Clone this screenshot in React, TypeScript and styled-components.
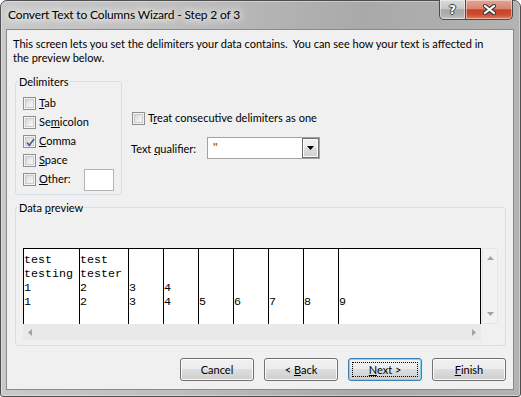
import React from 'react';
import styled, { createGlobalStyle } from 'styled-components';

const UI = `Lato, "Noto Sans", "Segoe UI", sans-serif`;

const Global = createGlobalStyle`
  html, body { margin: 0; padding: 0; background: #fff; overflow: hidden; }
  body { font-family: ${UI}; font-size: 11px; color: #000; }
`;

const Window = styled.div`
  width: 521px;
  height: 397px;
  box-sizing: border-box;
  border: 1px solid #4e4e4e;
  border-radius: 7px 7px 3px 3px;
  background: linear-gradient(to right, #c9c9c9 0%, #bdbdbd 35%, #a9a9a9 70%, #b3b3b3 100%);
  box-shadow: inset 0 0 0 1px rgba(255, 255, 255, 0.35);
  padding: 0 6px 6px 5px;
  display: flex;
  flex-direction: column;
  font-family: ${UI};
  font-size: 11px;
`;

const TitleBar = styled.div`
  height: 28px;
  flex: none;
  display: flex;
  align-items: flex-start;
`;

const Title = styled.div`
  flex: 1;
  padding: 6px 0 0 2px;
  font-size: 12px;
  letter-spacing: -0.15px;
  line-height: 15px;
  text-shadow: 0 0 6px #fff, 0 0 10px #fff, 0 0 14px #fff;
  white-space: nowrap;
`;

const Caption = styled.div`
  display: flex;
  margin: -1px 1px 0 0;
`;

const CapButton = styled.div<{ $kind: 'help' | 'close' }>`
  height: 20px;
  width: ${(p) => (p.$kind === 'close' ? 47 : 27)}px;
  box-sizing: border-box;
  border: 1px solid #4a4a4a;
  border-top: none;
  ${(p) => (p.$kind === 'close' ? 'border-left: none;' : '')}
  border-radius: ${(p) => (p.$kind === 'close' ? '0 0 5px 0' : '0 0 0 5px')};
  display: flex;
  align-items: center;
  justify-content: center;
  box-shadow: inset 0 0 0 1px rgba(255, 255, 255, 0.45);
  background: ${(p) =>
    p.$kind === 'close'
      ? 'linear-gradient(#e3a594 0%, #d98573 45%, #c4452c 52%, #cc4a2f 75%, #e27b5a 100%)'
      : 'linear-gradient(#d9d9d9 0%, #c8c8c8 45%, #a8a8a8 52%, #b0b0b0 80%, #c4c4c4 100%)'};
`;

const HelpGlyph = styled.span`
  font-family: "DejaVu Sans", sans-serif;
  font-weight: bold;
  font-size: 12px;
  line-height: 12px;
  color: #fff;
  text-shadow: 1px 0 #3a3a3a, -1px 0 #3a3a3a, 0 1px #3a3a3a, 0 -1px #3a3a3a;
`;

const Client = styled.div`
  flex: 1;
  background: #f0f0f0;
  border: 1px solid #8a8a8a;
  display: flex;
  flex-direction: column;
`;

const Intro = styled.p`
  margin: 0;
  padding: 7px 6px 0;
  line-height: 14px;
  white-space: nowrap;
`;

const OptionsRow = styled.div`
  display: flex;
  margin-top: 9px;
`;

const Group = styled.fieldset<{ $w: number }>`
  margin: 0 0 0 8px;
  min-width: 0;
  width: ${(p) => p.$w}px;
  box-sizing: border-box;
  border: 1px solid #d5dfe5;
  border-radius: 3px;
  padding: 5px 7px 5px 7px;
`;

const PreviewGroup = styled(Group)`
  margin-top: 5px;
  padding: 0 7px 5px 7px;
`;

const Legend = styled.legend`
  padding: 0 1px;
  margin-left: -5px;
  line-height: 15px;
  font-size: 11px;
`;

const CheckRow = styled.label`
  display: flex;
  align-items: center;
  height: 19px;
  white-space: nowrap;
`;

const Label = styled.span`
  line-height: 15px;
  margin-bottom: 2px;
`;

const Box = styled.span`
  position: relative;
  flex: none;
  width: 13px;
  height: 13px;
  box-sizing: border-box;
  border: 1px solid #8e8f8f;
  background: #f4f4f4;
  padding: 1px;
  margin-right: 3px;
  display: flex;
  &::before {
    content: '';
    flex: 1;
    border: 1px solid #c9cbce;
    background: linear-gradient(135deg, #d4d6d9 0%, #eeeeee 60%, #f8f8f8 100%);
  }
`;

const Tick = styled.svg`
  position: absolute;
  left: 1px;
  top: 1px;
`;

const OtherInput = styled.span`
  margin-left: auto;
  width: 30px;
  height: 22px;
  flex: none;
  box-sizing: border-box;
  border: 1px solid #b3b3b3;
  background: #fff;
`;

const Side = styled.div`
  display: flex;
  flex-direction: column;
  margin-left: 9px;
  padding-top: 35px;
`;

const SideCheck = styled(CheckRow)`
  padding-left: 1px;
`;

const QualRow = styled.div`
  display: flex;
  align-items: center;
  height: 22px;
  margin-top: 9px;
`;

const QualLabel = styled.span`
  width: 76px;
  line-height: 15px;
  white-space: nowrap;
`;

const Combo = styled.div`
  width: 113px;
  height: 22px;
  box-sizing: border-box;
  border: 1px solid #a3a3a3;
  background: #fff;
  display: flex;
  align-items: stretch;
`;

const ComboValue = styled.span`
  flex: 1;
  padding-left: 5px;
  line-height: 17px;
  color: #b8600a;
  font-size: 12px;
  font-weight: bold;
`;

const ComboButton = styled.span`
  width: 17px;
  box-sizing: border-box;
  border: 1px solid #707070;
  background: linear-gradient(#f2f2f2 0%, #ebebeb 50%, #dddddd 50%, #cfcfcf 100%);
  box-shadow: inset 0 0 0 1px #fbfbfb;
  display: flex;
  align-items: center;
  justify-content: center;
`;

const PreviewFrame = styled.div`
  margin-top: 33px;
  display: grid;
  grid-template-columns: 458px 16px;
  grid-template-rows: 76px 16px;
  column-gap: 1px;
`;

const Grid = styled.div`
  background: #fff;
  border-top: 1px solid #000;
  border-right: 1px solid #000;
  display: flex;
  overflow: hidden;
`;

const Col = styled.div<{ $w?: number }>`
  ${(p) => (p.$w ? `width: ${p.$w}px; flex: none;` : 'flex: 1;')}
  box-sizing: border-box;
  border-left: 1px solid #000;
  padding-top: 4px;
  font-family: "Liberation Mono", "Courier New", monospace;
  font-size: 11.667px;
  line-height: 14px;
  white-space: pre;
`;

const Cell = styled.div`
  height: 14px;
`;

const VScroll = styled.div`
  background: #f2f2f2;
  border: 1px solid #e6e6e6;
  box-sizing: border-box;
  display: flex;
  flex-direction: column;
  justify-content: space-between;
  align-items: center;
  padding: 7px 0;
`;

const HScroll = styled.div`
  background: #e9e9e9;
  display: flex;
  justify-content: space-between;
  align-items: center;
  padding: 0 5px;
`;

const ButtonRow = styled.div`
  display: flex;
  justify-content: flex-end;
  gap: 10px;
  margin-top: 12px;
  padding-right: 7px;
`;

const Btn = styled.button<{ $default?: boolean }>`
  position: relative;
  width: 74px;
  height: 23px;
  box-sizing: border-box;
  padding: 0;
  border: 1px solid ${(p) => (p.$default ? '#3c7fb1' : '#707070')};
  border-radius: 3px;
  background: linear-gradient(#f2f2f2 0%, #ebebeb 50%, #dddddd 50%, #cfcfcf 100%);
  box-shadow: inset 0 0 0 1px ${(p) => (p.$default ? '#7fd3f5' : '#fbfbfb')};
  font-family: ${UI};
  font-size: 11px;
  line-height: 15px;
  color: #000;
  ${(p) =>
    p.$default
      ? `&::after { content: ''; position: absolute; inset: 3px 3px 3px 3px; border: 1px dotted #000; }`
      : ''}
`;

const Arrow: React.FC<{ dir: 'up' | 'down' | 'left' | 'right' }> = ({ dir }) => {
  const horiz = dir === 'left' || dir === 'right';
  const w = horiz ? 4 : 7;
  const h = horiz ? 7 : 4;
  const pts =
    dir === 'up'
      ? '3.5,0 7,4 0,4'
      : dir === 'down'
      ? '0,0 7,0 3.5,4'
      : dir === 'left'
      ? '4,0 4,7 0,3.5'
      : '0,0 4,3.5 0,7';
  return (
    <svg width={w} height={h} viewBox={`0 0 ${w} ${h}`}>
      <polygon points={pts} fill="#a2a2a2" />
    </svg>
  );
};

const Check: React.FC<{ label: React.ReactNode; checked?: boolean; extra?: React.ReactNode }> = ({
  label,
  checked,
  extra,
}) => (
  <CheckRow>
    <Box>
      {checked && (
        <Tick width="11" height="11" viewBox="0 0 11 11">
          <path d="M2 5.5 L4.3 8.3 L9 2" fill="none" stroke="#4a5f8e" strokeWidth="1.7" />
        </Tick>
      )}
    </Box>
    <Label>{label}</Label>
    {extra}
  </CheckRow>
);

const columns: { w?: number; cells: string[] }[] = [
  { w: 56, cells: ['test', 'testing', '1', '1'] },
  { w: 49, cells: ['test', 'tester', '2', '2'] },
  { w: 35, cells: ['', '', '3', '3'] },
  { w: 35, cells: ['', '', '4', '4'] },
  { w: 35, cells: ['', '', '', '5'] },
  { w: 35, cells: ['', '', '', '6'] },
  { w: 35, cells: ['', '', '', '7'] },
  { w: 35, cells: ['', '', '', '8'] },
  { cells: ['', '', '', '9'] },
];

export default function App() {
  return (
    <>
      <Global />
      <Window>
        <TitleBar>
          <Title>Convert Text to Columns Wizard - Step 2 of 3</Title>
          <Caption>
            <CapButton $kind="help">
              <HelpGlyph>?</HelpGlyph>
            </CapButton>
            <CapButton $kind="close">
              <svg width="15" height="11" viewBox="0 0 15 11">
                <path d="M3 2 L12 9 M12 2 L3 9" stroke="#3b3b3b" strokeWidth="4.2" strokeLinecap="round" />
                <path d="M3 2 L12 9 M12 2 L3 9" stroke="#fff" strokeWidth="2.2" strokeLinecap="round" />
              </svg>
            </CapButton>
          </Caption>
        </TitleBar>
        <Client>
          <Intro>
            This screen lets you set the delimiters your data contains.{'\u00a0'} You can see how your text is
            affected in
            <br />
            the preview below.
          </Intro>
          <OptionsRow>
            <Group $w={107}>
              <Legend>Delimiters</Legend>
              <Check label={<><u>T</u>ab</>} />
              <Check label={<>Se<u>m</u>icolon</>} />
              <Check label={<><u>C</u>omma</>} checked />
              <Check label={<><u>S</u>pace</>} />
              <Check label={<><u>O</u>ther:</>} extra={<OtherInput />} />
            </Group>
            <Side>
              <SideCheck>
                <Box />
                <Label>
                  T<u>r</u>eat consecutive delimiters as one
                </Label>
              </SideCheck>
              <QualRow>
                <QualLabel>
                  Text <u>q</u>ualifier:
                </QualLabel>
                <Combo>
                  <ComboValue>"</ComboValue>
                  <ComboButton>
                    <svg width="7" height="4" viewBox="0 0 7 4">
                      <polygon points="0,0 7,0 3.5,4" fill="#000" />
                    </svg>
                  </ComboButton>
                </Combo>
              </QualRow>
            </Side>
          </OptionsRow>
          <PreviewGroup $w={491}>
            <Legend>
              Data <u>p</u>review
            </Legend>
            <PreviewFrame>
              <Grid>
                {columns.map((c, i) => (
                  <Col key={i} $w={c.w}>
                    {c.cells.map((t, j) => (
                      <Cell key={j}>{t}</Cell>
                    ))}
                  </Col>
                ))}
              </Grid>
              <VScroll>
                <Arrow dir="up" />
                <Arrow dir="down" />
              </VScroll>
              <HScroll>
                <Arrow dir="left" />
                <Arrow dir="right" />
              </HScroll>
            </PreviewFrame>
          </PreviewGroup>
          <ButtonRow>
            <Btn>Cancel</Btn>
            <Btn>
              &lt; <u>B</u>ack
            </Btn>
            <Btn $default>
              <u>N</u>ext &gt;
            </Btn>
            <Btn>
              <u>F</u>inish
            </Btn>
          </ButtonRow>
        </Client>
      </Window>
    </>
  );
}
